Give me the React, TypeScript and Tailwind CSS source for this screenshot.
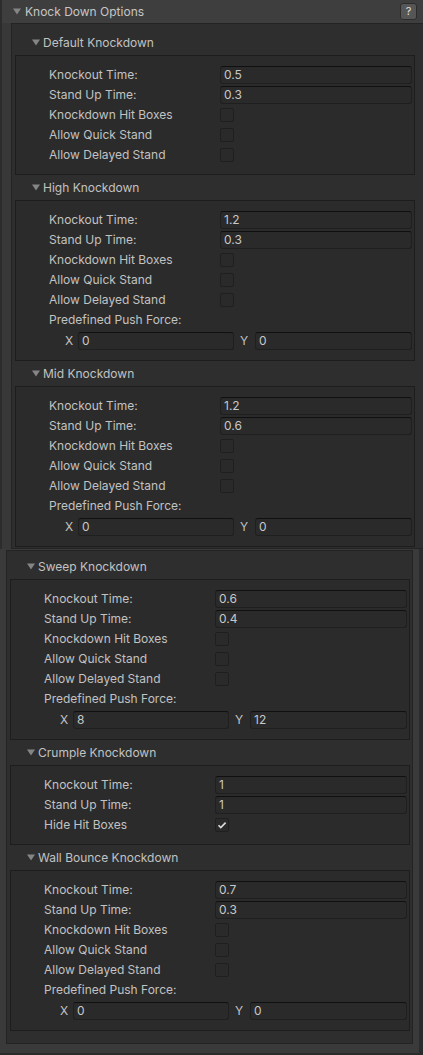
type Section = {
  title: string;
  knockout: string;
  standUp: string;
  kind: 'basic' | 'push' | 'crumple';
  push?: [string, string];
};

const top: Section[] = [
  { title: 'Default Knockdown', knockout: '0.5', standUp: '0.3', kind: 'basic' },
  { title: 'High Knockdown', knockout: '1.2', standUp: '0.3', kind: 'push', push: ['0', '0'] },
  { title: 'Mid Knockdown', knockout: '1.2', standUp: '0.6', kind: 'push', push: ['0', '0'] },
];

const bottom: Section[] = [
  { title: 'Sweep Knockdown', knockout: '0.6', standUp: '0.4', kind: 'push', push: ['8', '12'] },
  { title: 'Crumple Knockdown', knockout: '1', standUp: '1', kind: 'crumple' },
  { title: 'Wall Bounce Knockdown', knockout: '0.7', standUp: '0.3', kind: 'push', push: ['0', '0'] },
];

const Triangle = () => (
  <svg width="8" height="7" viewBox="0 0 8 7" className="shrink-0">
    <path d="M0 0.5h8L4 6.5z" fill="#858585" />
  </svg>
);

const Field = ({ value }: { value: string }) => (
  <div className="h-[18px] flex-1 flex items-center rounded-[3px] border border-[#1f1f1f] border-t-[#101010] bg-[#2a2a2a] pl-[3px] text-[#c8c8c8]">
    {value}
  </div>
);

const Check = ({ checked }: { checked?: boolean }) => (
  <div className="w-[14px] h-[14px] flex items-center justify-center rounded-[2px] border border-[#1f1f1f] bg-[#2a2a2a]">
    {checked && (
      <svg width="10" height="10" viewBox="0 0 10 10">
        <path d="M1.5 5.2l2.3 2.3L8.6 2.6" stroke="#dcdcdc" strokeWidth="1.6" fill="none" />
      </svg>
    )}
  </div>
);

const Row = ({ label, children }: { label: string; children?: React.ReactNode }) => (
  <div className="h-[20px] flex items-center">
    <span className="w-[171px] shrink-0">{label}</span>
    {children}
  </div>
);

const SectionBlock = ({ s }: { s: Section }) => (
  <div>
    <div className="h-[25px] flex items-center gap-[3px] pl-[17px]">
      <Triangle />
      <span>{s.title}</span>
    </div>
    <div className="w-[400px] border border-[#1d1d1d] bg-[#2b2b2b] py-[9px] pl-[33px] pr-[2px]">
      <Row label="Knockout Time:">
        <Field value={s.knockout} />
      </Row>
      <Row label="Stand Up Time:">
        <Field value={s.standUp} />
      </Row>
      {s.kind === 'crumple' ? (
        <Row label="Hide Hit Boxes">
          <Check checked />
        </Row>
      ) : (
        <>
          <Row label="Knockdown Hit Boxes">
            <Check />
          </Row>
          <Row label="Allow Quick Stand">
            <Check />
          </Row>
          <Row label="Allow Delayed Stand">
            <Check />
          </Row>
        </>
      )}
      {s.kind === 'push' && s.push && (
        <>
          <Row label="Predefined Push Force:" />
          <div className="h-[21px] flex items-center pl-[14px]">
            <span className="w-[15px] shrink-0 pl-[2px]">X</span>
            <div className="w-[156px] flex">
              <Field value={s.push[0]} />
            </div>
            <span className="w-[21px] shrink-0 pl-[6px]">Y</span>
            <Field value={s.push[1]} />
          </div>
        </>
      )}
    </div>
  </div>
);

export default function App() {
  return (
    <div className="w-[423px] h-[1055px] overflow-hidden bg-[#383838] font-[Inter,'Noto_Sans',sans-serif] text-[12px] leading-none text-[#c2c2c2]">
      <div className="h-[549px] flex flex-col border-l-2 border-[#2c2c2c]">
        <div className="h-[23px] shrink-0 flex items-center gap-[4px] bg-[#3e3e3e] pl-[11px] pr-[6px]">
          <Triangle />
          <span className="flex-1 text-[#c6c6c6]">Knock Down Options</span>
          <div className="w-[17px] h-[17px] flex items-center justify-center rounded-[3px] border border-[#2c2c2c] bg-[#565656] text-[11px] text-[#e0e0e0]">
            ?
          </div>
        </div>
        <div className="flex-1 ml-[9px] border-l border-t border-b border-[#232323] bg-[#2e2e2e] pl-[3px] pt-[6px]">
          {top.map((s) => (
            <SectionBlock key={s.title} s={s} />
          ))}
        </div>
      </div>
      <div className="h-[506px] flex flex-col bg-[#3a3a3a] border-r-4 border-b-2 border-[#2b2b2b] pt-[1px]">
        <div className="w-[407px] ml-[6px] border border-[#232323] bg-[#2e2e2e] pl-[3px] pt-[3px] pb-[12px]">
          {bottom.map((s) => (
            <SectionBlock key={s.title} s={s} />
          ))}
        </div>
      </div>
    </div>
  );
}
